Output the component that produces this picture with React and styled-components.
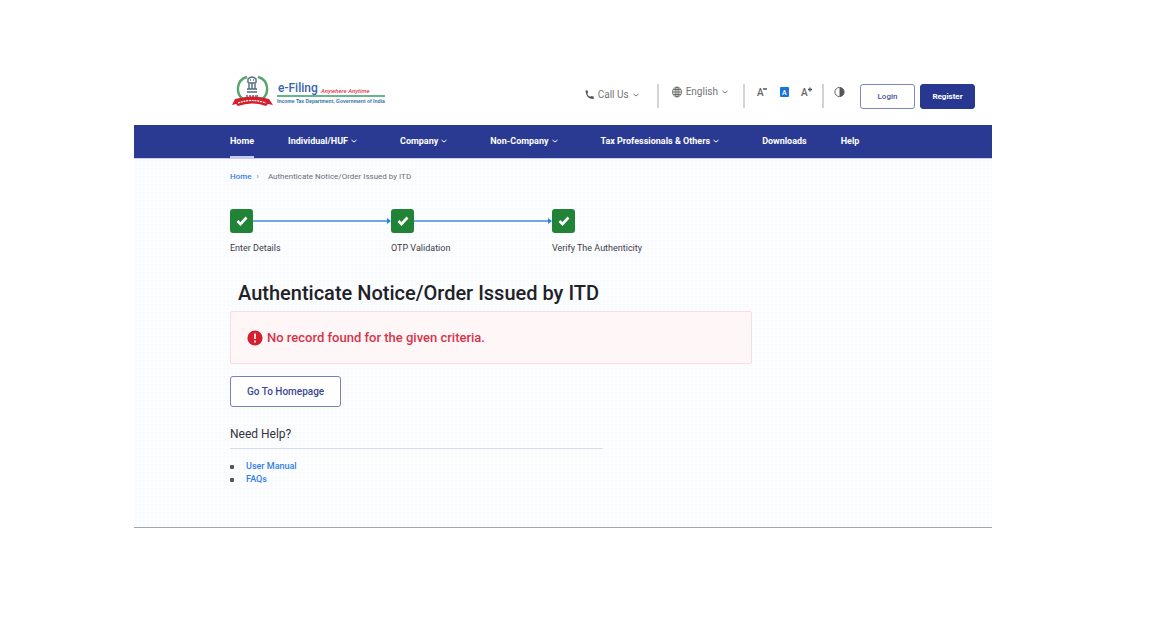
import React from 'react';
import styled, { createGlobalStyle } from 'styled-components';

const GlobalStyle = createGlobalStyle`
    * {
        box-sizing: border-box;
    }
    body {
        margin: 0;
        background: #fff;
        color: #333;
        font-family: Roboto, "Liberation Sans", sans-serif;
        font-size: 10px;
    }
    a {
        color: #2f7fe6;
        text-decoration: none;
    }
    button {
        font-family: inherit;
        cursor: pointer;
    }
`;

const PageStyles = styled.div`
    padding: 67px 160px 0 134px;
`;

const HeaderStyles = styled.header`
    display: flex;
    justify-content: space-between;
    align-items: center;
    height: 58px;
    padding: 0 17px 0 96px;
`;

const LogoLink = styled.a`
    display: flex;
    margin-bottom: 10px;
`;

const Tools = styled.div`
    display: flex;
    align-items: center;
`;

const ToolButton = styled.button`
    display: flex;
    align-items: center;
    gap: 4px;
    height: 14px;
    padding: 0;
    margin-bottom: ${props => props.$raised ? 8 : 2}px;
    border: 0;
    background: none;
    color: #757575;
    font-size: 10px;
    line-height: 14px;
`;

const Divider = styled.span`
    width: 2px;
    height: 24px;
    margin: 0 ${props => props.$after}px 0 ${props => props.$before}px;
    background: #d4d4d4;
`;

const FontSizes = styled.div`
    display: flex;
    gap: 12px;
`;

const Buttons = styled.div`
    display: flex;
    gap: 5px;
    margin-left: 15px;
`;

const HeaderButton = styled.button`
    width: 55px;
    height: 25px;
    padding: 0;
    border: 1px solid ${props => props.$filled ? '#283890' : '#7d86c4'};
    border-radius: 3px;
    background: ${props => props.$filled ? '#283890' : '#fff'};
    color: ${props => props.$filled ? '#fff' : '#4a559f'};
    font-size: 8px;
    font-weight: ${props => props.$filled ? 700 : 500};
`;

const NavStyles = styled.nav`
    display: flex;
    gap: 34px;
    height: 33px;
    padding-left: 96px;
    background: #2a3a92;
`;

const NavLink = styled.a`
    display: flex;
    align-items: center;
    gap: 3px;
    margin-right: ${props => props.$menu ? 9 : 0}px;
    border-bottom: 2px solid ${props => props.$active ? '#c5cbf2' : 'transparent'};
    color: #fff;
    font-size: 9px;
    font-weight: 700;
    white-space: nowrap;
`;

const MainStyles = styled.main`
    padding: 12px 0 41px 96px;
    border-top: 1px solid #c9cdf0;
    border-bottom: 1px solid #a2a2b0;
    background-color: #fcfdff;
    background-image: radial-gradient(#f8fafe 1px, transparent 1px);
    background-size: 4px 4px;
`;

const Breadcrumb = styled.nav`
    display: flex;
    gap: 5px;
    font-size: 8px;
    line-height: 12px;
    color: #6c6c78;

    a {
        font-weight: 500;
    }
    .current {
        margin-left: 4px;
    }
`;

const Steps = styled.ol`
    display: flex;
    margin: 26px 0 0;
    padding: 0;
    list-style: none;
`;

const Step = styled.li`
    width: 161px;
    font-size: 9px;
    line-height: 14px;
    color: #3c3c46;
    white-space: nowrap;
`;

const StepTop = styled.div`
    display: flex;
    align-items: center;
    margin-bottom: 8px;
`;

const StepBox = styled.span`
    display: flex;
    justify-content: center;
    align-items: center;
    flex: none;
    width: 23px;
    height: 24px;
    border-radius: 3px;
    background: #218336;
`;

const Connector = styled.span`
    flex: 1;
    height: 2px;
    background: #6fa8e4;
`;

const Arrow = styled.span`
    border: solid transparent;
    border-width: 3px 0 3px 4px;
    border-left-color: #2381e4;
`;

const Title = styled.h1`
    margin: 26px 0 6px 8px;
    font-size: 20px;
    font-weight: 500;
    line-height: 24px;
    color: #212127;
`;

const Alert = styled.div`
    display: flex;
    align-items: center;
    gap: 4px;
    max-width: 522px;
    height: 53px;
    padding: 0 16px;
    border: 1px solid #fadde2;
    border-radius: 2px;
    background: #fff6f7;
    color: #d5354a;
    font-size: 13px;
    font-weight: 500;
`;

const HomeButton = styled.button`
    display: block;
    height: 31px;
    margin-top: 12px;
    padding: 0 16px;
    border: 1px solid #7780bd;
    border-radius: 3px;
    background: #fff;
    color: #3d4894;
    font-size: 10px;
    font-weight: 500;
`;

const HelpTitle = styled.h2`
    max-width: 373px;
    margin: 19px 0 0;
    padding-bottom: 6px;
    border-bottom: 1px solid #d8daee;
    font-size: 12px;
    font-weight: 400;
    line-height: 16px;
    color: #33333b;
`;

const HelpList = styled.ul`
    margin: 11px 0 0;
    padding: 0;
    list-style: none;

    li {
        display: flex;
        align-items: center;
        gap: 12px;
        font-size: 9px;
        font-weight: 500;
        line-height: 13px;
    }
    li::before {
        content: '';
        width: 4px;
        height: 4px;
        border-radius: 1px;
        background: #555;
    }
`;

const Chevron = ({ size = 6 }) => (
    <svg width={size} height={size} viewBox="0 0 6 6" fill="none" stroke="currentColor" aria-hidden="true">
        <path d="M.5 2l2.5 2 2.5-2" />
    </svg>
);

const Logo = () => (
    <svg width="156" height="34" viewBox="0 0 156 34" role="img" aria-label="e-Filing">
        <path d="M17 3C6 6 5 20 14 26M28 3c11 3 12 17 3 23" fill="none" stroke="#58a56c" strokeWidth="2.4" />
        <g fill="none" stroke="#526b82" strokeWidth="1.4">
            <path d="M18 9V5q4-4 8 0v4M20 6h1M23 6h1M18 9h8M19 10v5M22 9v6M25 10v5M17 15h10M17 18h10" />
            <path d="M16 22h2M19 22h2M22 22h2M25 22h3" />
        </g>
        <path d="M2 31l3-6q17-5 34 0l4 6-5-1-2 2q-14-5-28 0l-2-2z" fill="#d4202c" />
        <path d="M8 29q14-5 28 0" fill="none" stroke="#fff" strokeWidth="1.2" strokeDasharray="2 .8" />
        <text x="48" y="18" fontSize="12" fontWeight="500" fill="#3a64ae">e-Filing</text>
        <text x="91" y="19" fontSize="6" fontStyle="italic" fontWeight="500" fill="#e03550">Anywhere Anytime</text>
        <path d="M47 22h108" stroke="#66b58d" strokeWidth="2" />
        <text x="47" y="29" fontSize="5" fontWeight="700" fontFamily="Liberation Sans" fill="#2f6fb0">Income Tax Department, Government of India</text>
    </svg>
);

const Phone = () => (
    <svg width="9" height="10" viewBox="0 0 9 10" aria-hidden="true">
        <path d="M.5.5L2.5.2l.6 2.5-.9 1Q3.200 6 5.300 6.800l1-.8 2.400.5v2.400Q1 9.300.5.5z" fill="#555" />
    </svg>
);

const Globe = () => (
    <svg width="10" height="12" viewBox="0 0 10 12" fill="none" stroke="#666" strokeWidth=".9" aria-hidden="true">
        <ellipse cx="5" cy="6" rx="4.500" ry="5" />
        <ellipse cx="5" cy="6" rx="2" ry="5" />
        <path d="M.5 6h9M1 3.500h8M1 8.500h8M5 1v10" />
    </svg>
);

const Contrast = () => (
    <svg width="11" height="12" viewBox="0 0 11 12" aria-hidden="true">
        <circle cx="5.500" cy="6" r="4.600" fill="none" stroke="#666" />
        <path d="M5.500 1.400a4.600 4.600 0 0 1 0 9.200z" fill="#555" />
    </svg>
);

const Check = () => (
    <svg width="12" height="10" viewBox="0 0 12 10" fill="none" stroke="#fff" strokeWidth="2.600" aria-hidden="true">
        <path d="M1.500 5l3 3 6-6.500" />
    </svg>
);

const AlertIcon = () => (
    <svg width="16" height="16" viewBox="0 0 16 16" aria-hidden="true">
        <circle cx="8" cy="8" r="7.600" fill="#d3202f" />
        <path d="M8 3.500v5.500M8 10.500v2" stroke="#fff" strokeWidth="1.600" />
    </svg>
);

const FontButton = styled(ToolButton)`
    margin: 0 0 8px;
    justify-content: center;
    width: ${props => props.$current ? 9 : 11}px;

    svg {
        display: block;
    }
    text {
        font-size: ${props => props.$current ? 7 : 10}px;
        font-weight: 500;
        fill: ${props => props.$current ? '#fff' : '#666'};
    }
`;

const navItems = [
    { label: 'Home', active: true },
    { label: 'Individual/HUF', menu: true },
    { label: 'Company', menu: true },
    { label: 'Non-Company', menu: true },
    { label: 'Tax Professionals & Others', menu: true },
    { label: 'Downloads' },
    { label: 'Help' },
];

const steps = ['Enter Details', 'OTP Validation', 'Verify The Authenticity'];

const App = () => {
    return (
        <PageStyles>
            <GlobalStyle />
            <HeaderStyles>
                <LogoLink href="#home"><Logo /></LogoLink>
                <Tools>
                    <ToolButton><Phone />Call Us<Chevron /></ToolButton>
                    <Divider $before={18} $after={13} />
                    <ToolButton $raised><Globe />English<Chevron /></ToolButton>
                    <Divider $before={15} $after={12} />
                    <FontSizes>
                        <FontButton aria-label="Decrease text size">
                            <svg width="11" height="12">
                                <text x="0" y="10">A</text>
                                <path d="M6 3h4" stroke="#555" strokeWidth="1.500" />
                            </svg>
                        </FontButton>
                        <FontButton $current aria-label="Normal text size">
                            <svg width="9" height="10">
                                <rect width="9" height="10" rx="1" fill="#1976d8" />
                                <text x="2" y="8">A</text>
                            </svg>
                        </FontButton>
                        <FontButton aria-label="Increase text size">
                            <svg width="11" height="12">
                                <text x="0" y="10">A</text>
                                <path d="M7 3.500h4M9 1.500v4" stroke="#555" strokeWidth="1.300" />
                            </svg>
                        </FontButton>
                    </FontSizes>
                    <Divider $before={10} $after={10} />
                    <ToolButton $raised aria-label="Contrast"><Contrast /></ToolButton>
                    <Buttons>
                        <HeaderButton>Login</HeaderButton>
                        <HeaderButton $filled>Register</HeaderButton>
                    </Buttons>
                </Tools>
            </HeaderStyles>
            <NavStyles>
                {navItems.map(item => (
                    <NavLink key={item.label} href="#nav" $active={item.active} $menu={item.menu}>
                        {item.label}
                        {item.menu && <Chevron />}
                    </NavLink>
                ))}
            </NavStyles>
            <MainStyles>
                <Breadcrumb>
                    <a href="#home">Home</a>
                    <span>›</span>
                    <span className="current">Authenticate Notice/Order Issued by ITD</span>
                </Breadcrumb>
                <Steps>
                    {steps.map((step, i) => (
                        <Step key={step}>
                            <StepTop>
                                <StepBox><Check /></StepBox>
                                {i < steps.length - 1 && <><Connector /><Arrow /></>}
                            </StepTop>
                            {step}
                        </Step>
                    ))}
                </Steps>
                <Title>Authenticate Notice/Order Issued by ITD</Title>
                <Alert role="alert"><AlertIcon />No record found for the given criteria.</Alert>
                <HomeButton>Go To Homepage</HomeButton>
                <HelpTitle>Need Help?</HelpTitle>
                <HelpList>
                    <li><a href="#manual">User Manual</a></li>
                    <li><a href="#faqs">FAQs</a></li>
                </HelpList>
            </MainStyles>
        </PageStyles>
    );
};

export default App;
